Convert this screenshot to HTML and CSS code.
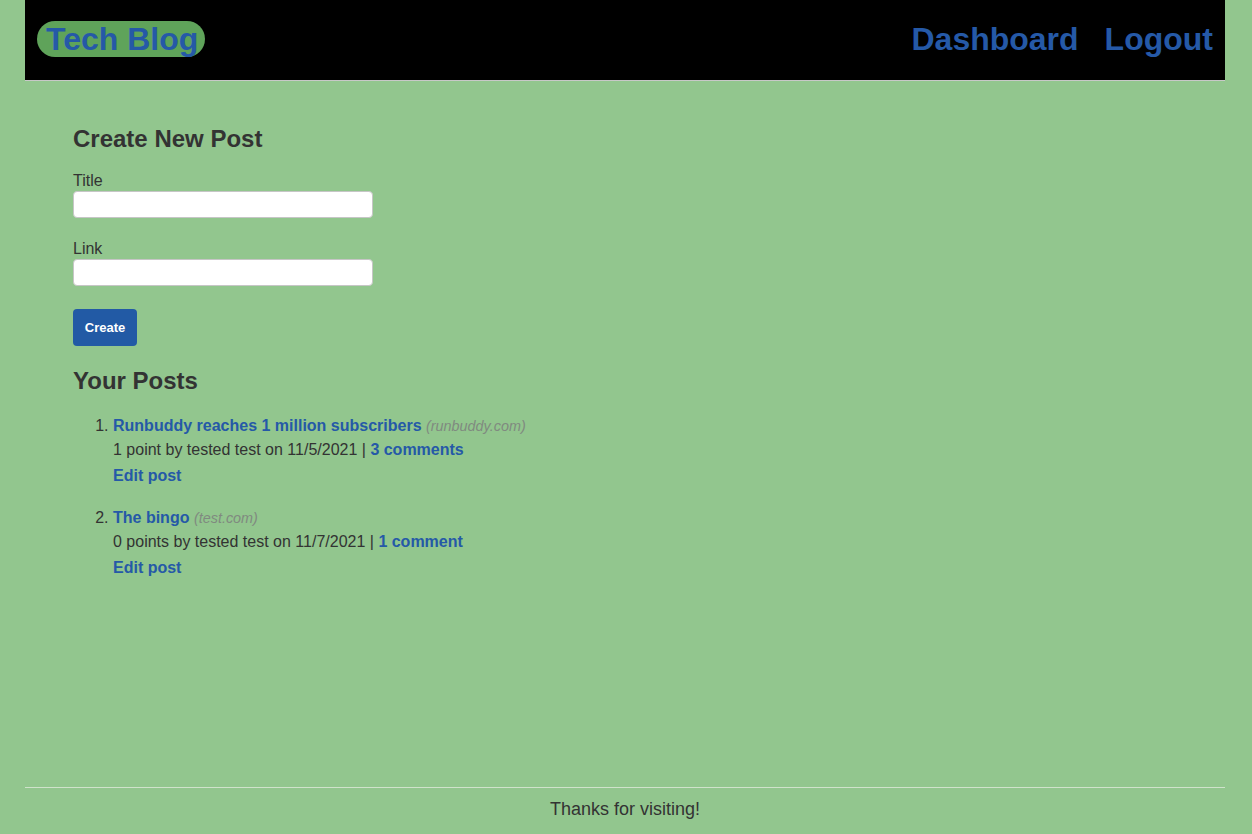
FILE: index.html
```html
<!DOCTYPE html>
<html lang="en">
<head>
<meta charset="utf-8">
<title>Tech Blog</title>
<link rel="stylesheet" href="styles.css">
</head>
<body>
<div class="page">
  <header class="site-header">
    <a class="logo" href="#">Tech Blog</a>
    <nav class="nav">
      <a href="#">Dashboard</a>
      <a href="#">Logout</a>
    </nav>
  </header>

  <main class="content">
    <h2 class="section-title">Create New Post</h2>
    <form class="post-form">
      <div class="field">
        <label for="title">Title</label>
        <input id="title" type="text">
      </div>
      <div class="field">
        <label for="link">Link</label>
        <input id="link" type="text">
      </div>
      <button type="button" class="btn">Create</button>
    </form>

    <h2 class="section-title">Your Posts</h2>
    <ol class="posts">
      <li class="post">
        <div><a class="post-title" href="#">Runbuddy reaches 1 million subscribers</a> <span class="domain">(runbuddy.com)</span></div>
        <div class="meta">1 point by tested test on 11/5/2021 | <a href="#">3 comments</a></div>
        <div class="edit"><a href="#">Edit post</a></div>
      </li>
      <li class="post">
        <div><a class="post-title" href="#">The bingo</a> <span class="domain">(test.com)</span></div>
        <div class="meta">0 points by tested test on 11/7/2021 | <a href="#">1 comment</a></div>
        <div class="edit"><a href="#">Edit post</a></div>
      </li>
    </ol>
  </main>

  <footer class="site-footer">Thanks for visiting!</footer>
</div>
</body>
</html>
```

FILE: styles.css
```css
html, body {
  margin: 0;
  padding: 0;
}

body {
  background: #92c68e;
  font-family: "Liberation Sans", Arial, sans-serif;
  color: #333;
  font-size: 16px;
}

.page {
  width: 1200px;
  margin: 0 auto 0 25px;
  min-height: 100vh;
  display: flex;
  flex-direction: column;
}

a {
  color: #2559a7;
  text-decoration: none;
  font-weight: bold;
}

.site-header {
  background: #000;
  height: 80px;
  border-bottom: 1px solid #c8c8c8;
  display: flex;
  align-items: center;
  justify-content: space-between;
  padding: 0 12px;
}

.logo {
  background: #5fa35a;
  border-radius: 18px;
  font-size: 32px;
  line-height: 36px;
  padding: 0 7px 0 9px;
  margin-top: -2px;
}

.nav {
  display: flex;
  gap: 26px;
  margin-top: -2px;
}

.nav a {
  font-size: 32px;
  line-height: 36px;
}

.content {
  flex: 1;
  padding: 44px 48px 0;
}

.section-title {
  font-size: 24px;
  line-height: 28px;
  margin: 0;
  color: #333;
}

.post-form {
  margin: 19px 0 21px;
  display: flex;
  flex-direction: column;
  align-items: flex-start;
}

.field {
  display: flex;
  flex-direction: column;
  margin-bottom: 22px;
}

.field label {
  line-height: 18px;
  margin-bottom: 1px;
}

.field input {
  width: 300px;
  height: 27px;
  box-sizing: border-box;
  border: 1px solid #c6c6c6;
  border-radius: 4px;
  background: #fff;
  padding: 2px 6px;
  font-size: 16px;
}

.field + .field {
  margin-bottom: 23px;
}

.btn {
  width: 64px;
  height: 37px;
  background: #225aa5;
  color: #fff;
  border: none;
  border-radius: 4px;
  font-family: "Liberation Sans", Arial, sans-serif;
  font-weight: bold;
  font-size: 13px;
  padding: 0;
}

.posts {
  margin: 19px 0 0;
  padding-left: 40px;
}

.post {
  line-height: 24px;
  margin-bottom: 18px;
}

.domain {
  color: #808a80;
  font-style: italic;
  font-size: 14.4px;
}

.edit {
  margin-top: 2px;
}

.site-footer {
  border-top: 1px solid #cfe2cb;
  margin-top: auto;
  text-align: center;
  font-size: 18px;
  line-height: 21px;
  padding: 11px 0 14px;
  color: #333;
}
```
